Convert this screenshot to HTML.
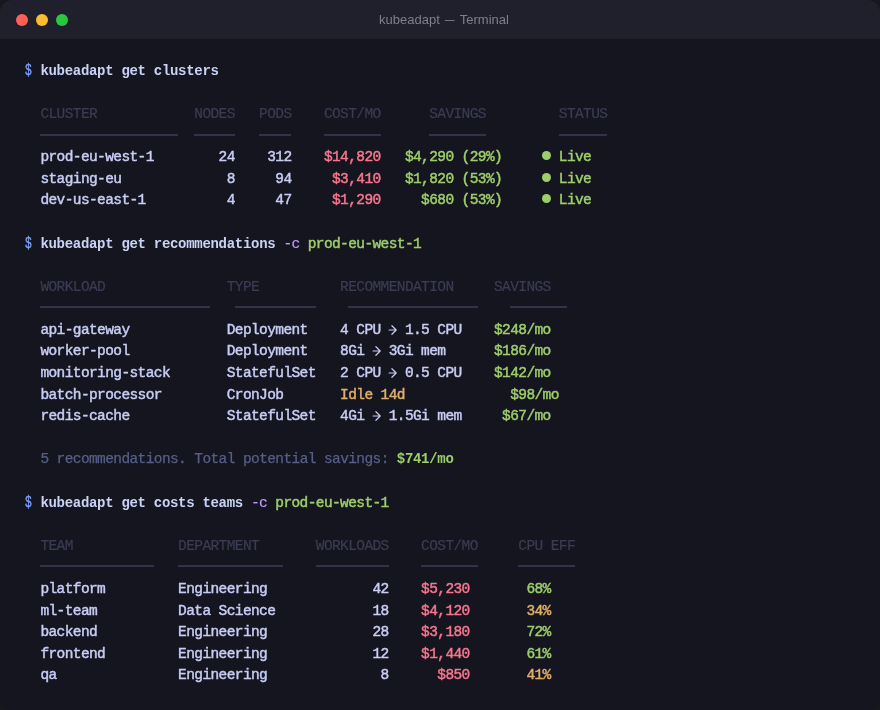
<!DOCTYPE html>
<html><head><meta charset="utf-8"><style>
html,body{margin:0;padding:0;background:#17171e;}
body{width:880px;height:710px;position:relative;overflow:hidden;}
.win{position:absolute;left:0;top:0;width:880px;height:710px;will-change:transform;background:#15151f;border-radius:12px;overflow:hidden;}
.bar{position:absolute;left:0;top:0;width:880px;height:38px;background:#20202c;border-bottom:1px solid #1e1e2a;}
.tl{position:absolute;top:13.5px;width:12px;height:12px;border-radius:50%;}
.title{position:absolute;left:4px;top:1px;width:880px;height:38px;line-height:38px;text-align:center;font-family:"Liberation Sans",sans-serif;font-size:13px;color:#7d7f8e;}
.t{position:absolute;white-space:pre;font-family:"Liberation Mono",monospace;font-size:14.5px;line-height:21.6px;letter-spacing:-0.6px;-webkit-text-stroke:0.45px currentColor;}
.h{-webkit-text-stroke:0.2px currentColor;}
.dm{-webkit-text-stroke:0.25px currentColor;}
.p{-webkit-text-stroke:0.35px currentColor;transform:translateY(0.4px) scale(0.78,1.08);transform-origin:50% 70%;}
.b{font-weight:700;-webkit-text-stroke:0;font-size:14.0px;letter-spacing:-0.3px;}
.u{position:absolute;height:2px;background:#31334a;}
.ar{position:absolute;overflow:visible;}
.d{position:absolute;width:9px;height:9px;border-radius:50%;background:#9ece6a;}
</style></head><body><div class="win">
<div class="bar"><div class="tl" style="left:16px;background:#ff5f57"></div><div class="tl" style="left:36px;background:#febc2e"></div><div class="tl" style="left:56px;background:#28c840"></div><div class="title">kubeadapt <span style="display:inline-block;transform:scaleX(0.75)">—</span> Terminal</div></div>
<div class="t p" style="left:24.20px;top:61.00px;color:#7aa2f7">$</div>
<div class="t b" style="left:40.40px;top:61.00px;color:#c8d3f5">kubeadapt get clusters</div>
<div class="t h" style="left:40.40px;top:104.00px;color:#3a3c53">CLUSTER</div>
<div class="t h" style="left:194.30px;top:104.00px;color:#3a3c53">NODES</div>
<div class="t h" style="left:259.10px;top:104.00px;color:#3a3c53">PODS</div>
<div class="t h" style="left:323.90px;top:104.00px;color:#3a3c53">COST/MO</div>
<div class="t h" style="left:429.20px;top:104.00px;color:#3a3c53">SAVINGS</div>
<div class="t h" style="left:558.80px;top:104.00px;color:#3a3c53">STATUS</div>
<div class="t" style="left:40.40px;top:147.00px;color:#c8cdf5">prod-eu-west-1</div>
<div class="t" style="left:218.60px;top:147.00px;color:#c8cdf5">24</div>
<div class="t" style="left:267.20px;top:147.00px;color:#c8cdf5">312</div>
<div class="t" style="left:323.90px;top:147.00px;color:#f7768e">$14,820</div>
<div class="t" style="left:404.90px;top:147.00px;color:#9ece6a">$4,290 (29%)</div>
<div class="t" style="left:558.80px;top:147.00px;color:#9ece6a">Live</div>
<div class="t" style="left:40.40px;top:169.00px;color:#c8cdf5">staging-eu</div>
<div class="t" style="left:226.70px;top:169.00px;color:#c8cdf5">8</div>
<div class="t" style="left:275.30px;top:169.00px;color:#c8cdf5">94</div>
<div class="t" style="left:332.00px;top:169.00px;color:#f7768e">$3,410</div>
<div class="t" style="left:404.90px;top:169.00px;color:#9ece6a">$1,820 (53%)</div>
<div class="t" style="left:558.80px;top:169.00px;color:#9ece6a">Live</div>
<div class="t" style="left:40.40px;top:190.00px;color:#c8cdf5">dev-us-east-1</div>
<div class="t" style="left:226.70px;top:190.00px;color:#c8cdf5">4</div>
<div class="t" style="left:275.30px;top:190.00px;color:#c8cdf5">47</div>
<div class="t" style="left:332.00px;top:190.00px;color:#f7768e">$1,290</div>
<div class="t" style="left:421.10px;top:190.00px;color:#9ece6a">$680 (53%)</div>
<div class="t" style="left:558.80px;top:190.00px;color:#9ece6a">Live</div>
<div class="t p" style="left:24.20px;top:234.00px;color:#7aa2f7">$</div>
<div class="t b" style="left:40.40px;top:234.00px;color:#c8d3f5">kubeadapt get recommendations</div>
<div class="t h" style="left:283.40px;top:234.00px;color:#c099ff">-c</div>
<div class="t" style="left:307.70px;top:234.00px;color:#9ece6a">prod-eu-west-1</div>
<div class="t h" style="left:40.40px;top:277.00px;color:#3a3c53">WORKLOAD</div>
<div class="t h" style="left:226.70px;top:277.00px;color:#3a3c53">TYPE</div>
<div class="t h" style="left:340.10px;top:277.00px;color:#3a3c53">RECOMMENDATION</div>
<div class="t h" style="left:494.00px;top:277.00px;color:#3a3c53">SAVINGS</div>
<div class="t" style="left:40.40px;top:320.00px;color:#c8cdf5">api-gateway</div>
<div class="t" style="left:226.70px;top:320.00px;color:#c8cdf5">Deployment</div>
<div class="t" style="left:340.10px;top:320.00px;color:#c8cdf5">4 CPU   1.5 CPU</div>
<svg class="ar" style="left:388.70px;top:323.50px" width="8.10" height="12" viewBox="0 0 8.10 12"><path d="M0.1 6H7.199999999999999M2.90 1.70L7.199999999999999 6L2.90 10.30" fill="none" stroke="#c8cdf5" stroke-width="1.2" stroke-linecap="round" stroke-linejoin="round"/></svg>
<div class="t" style="left:494.00px;top:320.00px;color:#9ece6a">$248/mo</div>
<div class="t" style="left:40.40px;top:341.00px;color:#c8cdf5">worker-pool</div>
<div class="t" style="left:226.70px;top:341.00px;color:#c8cdf5">Deployment</div>
<div class="t" style="left:340.10px;top:341.00px;color:#c8cdf5">8Gi   3Gi mem</div>
<svg class="ar" style="left:372.50px;top:344.50px" width="8.10" height="12" viewBox="0 0 8.10 12"><path d="M0.1 6H7.199999999999999M2.90 1.70L7.199999999999999 6L2.90 10.30" fill="none" stroke="#c8cdf5" stroke-width="1.2" stroke-linecap="round" stroke-linejoin="round"/></svg>
<div class="t" style="left:494.00px;top:341.00px;color:#9ece6a">$186/mo</div>
<div class="t" style="left:40.40px;top:363.00px;color:#c8cdf5">monitoring-stack</div>
<div class="t" style="left:226.70px;top:363.00px;color:#c8cdf5">StatefulSet</div>
<div class="t" style="left:340.10px;top:363.00px;color:#c8cdf5">2 CPU   0.5 CPU</div>
<svg class="ar" style="left:388.70px;top:366.50px" width="8.10" height="12" viewBox="0 0 8.10 12"><path d="M0.1 6H7.199999999999999M2.90 1.70L7.199999999999999 6L2.90 10.30" fill="none" stroke="#c8cdf5" stroke-width="1.2" stroke-linecap="round" stroke-linejoin="round"/></svg>
<div class="t" style="left:494.00px;top:363.00px;color:#9ece6a">$142/mo</div>
<div class="t" style="left:40.40px;top:385.00px;color:#c8cdf5">batch-processor</div>
<div class="t" style="left:226.70px;top:385.00px;color:#c8cdf5">CronJob</div>
<div class="t" style="left:340.10px;top:385.00px;color:#e0af68">Idle 14d</div>
<div class="t" style="left:510.20px;top:385.00px;color:#9ece6a">$98/mo</div>
<div class="t" style="left:40.40px;top:406.00px;color:#c8cdf5">redis-cache</div>
<div class="t" style="left:226.70px;top:406.00px;color:#c8cdf5">StatefulSet</div>
<div class="t" style="left:340.10px;top:406.00px;color:#c8cdf5">4Gi   1.5Gi mem</div>
<svg class="ar" style="left:372.50px;top:409.50px" width="8.10" height="12" viewBox="0 0 8.10 12"><path d="M0.1 6H7.199999999999999M2.90 1.70L7.199999999999999 6L2.90 10.30" fill="none" stroke="#c8cdf5" stroke-width="1.2" stroke-linecap="round" stroke-linejoin="round"/></svg>
<div class="t" style="left:502.10px;top:406.00px;color:#9ece6a">$67/mo</div>
<div class="t dm" style="left:40.40px;top:449.00px;color:#565f89">5 recommendations. Total potential savings:</div>
<div class="t b" style="left:396.80px;top:449.00px;color:#9ece6a">$741/mo</div>
<div class="t p" style="left:24.20px;top:493.00px;color:#7aa2f7">$</div>
<div class="t b" style="left:40.40px;top:493.00px;color:#c8d3f5">kubeadapt get costs teams</div>
<div class="t h" style="left:251.00px;top:493.00px;color:#c099ff">-c</div>
<div class="t" style="left:275.30px;top:493.00px;color:#9ece6a">prod-eu-west-1</div>
<div class="t h" style="left:40.40px;top:536.00px;color:#3a3c53">TEAM</div>
<div class="t h" style="left:178.10px;top:536.00px;color:#3a3c53">DEPARTMENT</div>
<div class="t h" style="left:315.80px;top:536.00px;color:#3a3c53">WORKLOADS</div>
<div class="t h" style="left:421.10px;top:536.00px;color:#3a3c53">COST/MO</div>
<div class="t h" style="left:518.30px;top:536.00px;color:#3a3c53">CPU EFF</div>
<div class="t" style="left:40.40px;top:579.00px;color:#c8cdf5">platform</div>
<div class="t" style="left:178.10px;top:579.00px;color:#c8cdf5">Engineering</div>
<div class="t" style="left:372.50px;top:579.00px;color:#c8cdf5">42</div>
<div class="t" style="left:421.10px;top:579.00px;color:#f7768e">$5,230</div>
<div class="t" style="left:526.40px;top:579.00px;color:#9ece6a">68%</div>
<div class="t" style="left:40.40px;top:601.00px;color:#c8cdf5">ml-team</div>
<div class="t" style="left:178.10px;top:601.00px;color:#c8cdf5">Data Science</div>
<div class="t" style="left:372.50px;top:601.00px;color:#c8cdf5">18</div>
<div class="t" style="left:421.10px;top:601.00px;color:#f7768e">$4,120</div>
<div class="t" style="left:526.40px;top:601.00px;color:#e0af68">34%</div>
<div class="t" style="left:40.40px;top:622.00px;color:#c8cdf5">backend</div>
<div class="t" style="left:178.10px;top:622.00px;color:#c8cdf5">Engineering</div>
<div class="t" style="left:372.50px;top:622.00px;color:#c8cdf5">28</div>
<div class="t" style="left:421.10px;top:622.00px;color:#f7768e">$3,180</div>
<div class="t" style="left:526.40px;top:622.00px;color:#9ece6a">72%</div>
<div class="t" style="left:40.40px;top:644.00px;color:#c8cdf5">frontend</div>
<div class="t" style="left:178.10px;top:644.00px;color:#c8cdf5">Engineering</div>
<div class="t" style="left:372.50px;top:644.00px;color:#c8cdf5">12</div>
<div class="t" style="left:421.10px;top:644.00px;color:#f7768e">$1,440</div>
<div class="t" style="left:526.40px;top:644.00px;color:#9ece6a">61%</div>
<div class="t" style="left:40.40px;top:665.00px;color:#c8cdf5">qa</div>
<div class="t" style="left:178.10px;top:665.00px;color:#c8cdf5">Engineering</div>
<div class="t" style="left:380.60px;top:665.00px;color:#c8cdf5">8</div>
<div class="t" style="left:437.30px;top:665.00px;color:#f7768e">$850</div>
<div class="t" style="left:526.40px;top:665.00px;color:#e0af68">41%</div>
<div class="u" style="left:40.40px;top:134px;width:137.70px"></div>
<div class="u" style="left:194.30px;top:134px;width:40.50px"></div>
<div class="u" style="left:259.10px;top:134px;width:32.40px"></div>
<div class="u" style="left:323.90px;top:134px;width:56.70px"></div>
<div class="u" style="left:429.20px;top:134px;width:56.70px"></div>
<div class="u" style="left:558.80px;top:134px;width:48.60px"></div>
<div class="u" style="left:40.40px;top:306px;width:170.10px"></div>
<div class="u" style="left:234.80px;top:306px;width:81.00px"></div>
<div class="u" style="left:348.20px;top:306px;width:129.60px"></div>
<div class="u" style="left:510.20px;top:306px;width:56.70px"></div>
<div class="u" style="left:40.40px;top:565px;width:113.40px"></div>
<div class="u" style="left:178.10px;top:565px;width:105.30px"></div>
<div class="u" style="left:315.80px;top:565px;width:72.90px"></div>
<div class="u" style="left:421.10px;top:565px;width:56.70px"></div>
<div class="u" style="left:518.30px;top:565px;width:56.70px"></div>
<div class="d" style="left:542.15px;top:151.30px"></div>
<div class="d" style="left:542.15px;top:173.30px"></div>
<div class="d" style="left:542.15px;top:194.30px"></div>
</div></body></html>
